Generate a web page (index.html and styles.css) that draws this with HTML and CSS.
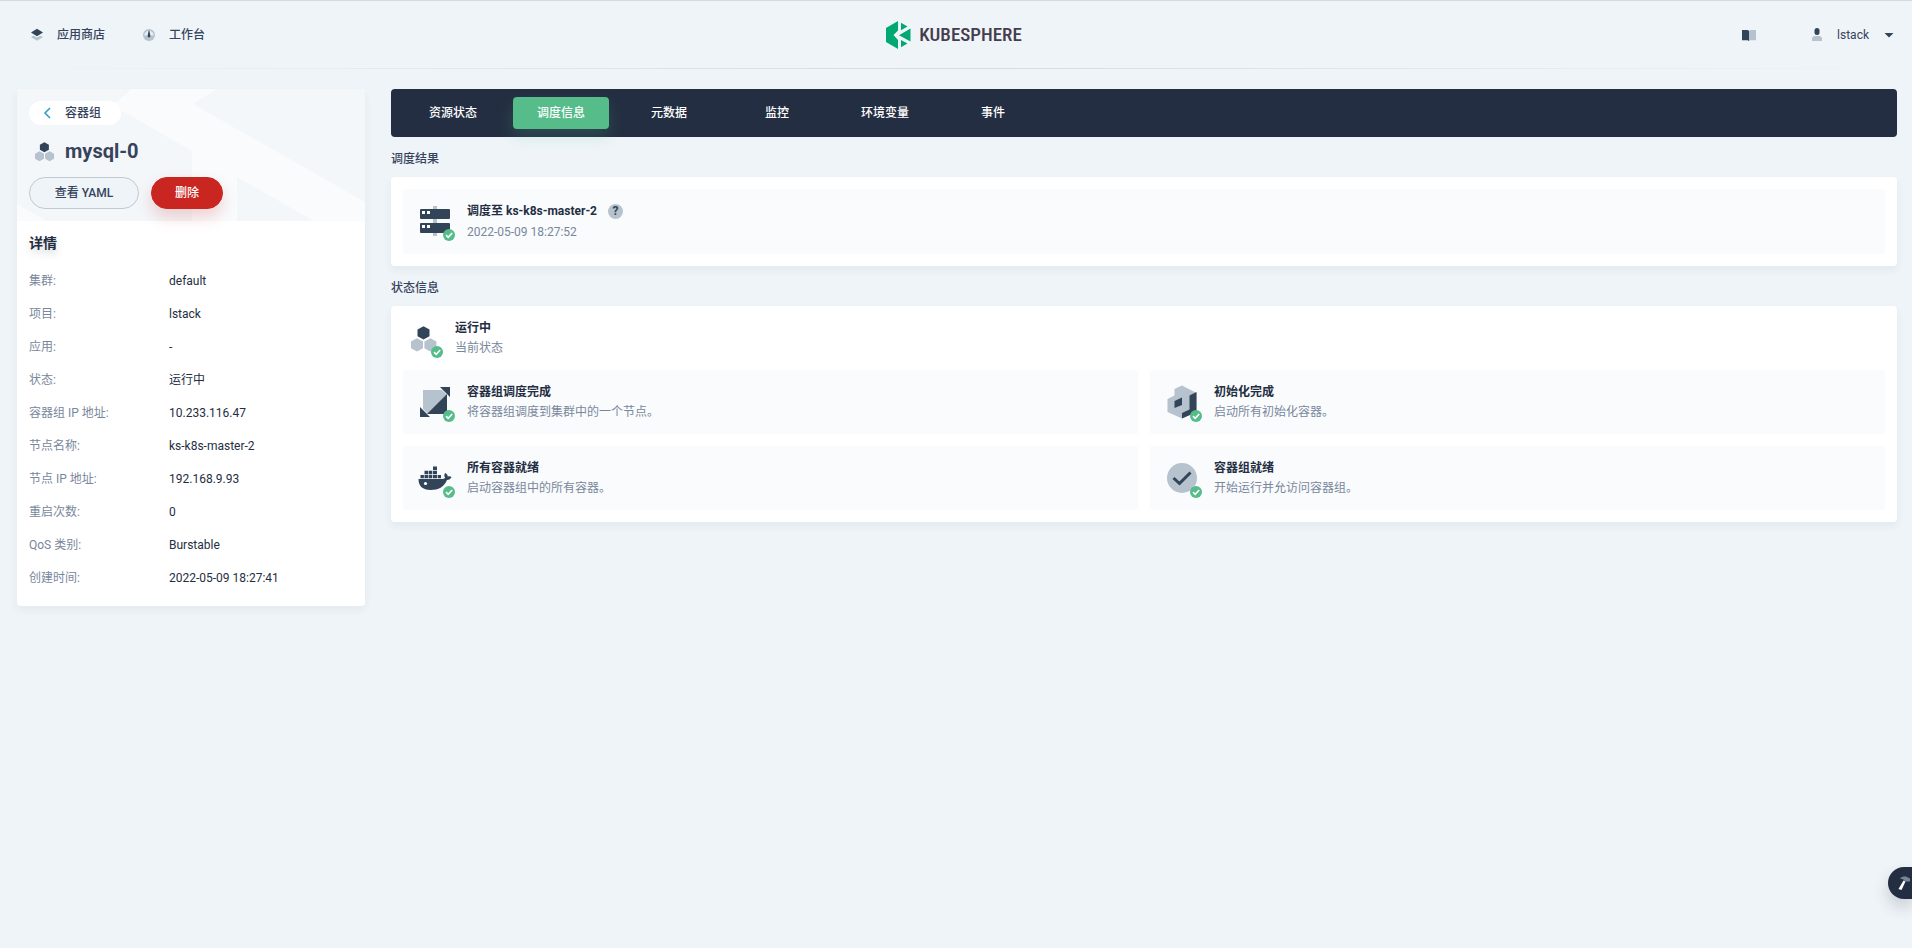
FILE: index.html
```html
<!DOCTYPE html>
<html lang="zh-CN">
<head>
<meta charset="utf-8">
<title>KubeSphere</title>
<link rel="stylesheet" href="styles.css">
</head>
<body>
<svg class="defs" width="0" height="0" aria-hidden="true">
  <symbol id="pods" viewBox="0 0 40 40">
    <path class="dark" d="M20.500 8.200l6 3.300v6.800l-6 3.300-6-3.300v-6.800z"/>
    <path class="light" d="M14 20.200l6 3.300v6.800l-6 3.300-6-3.300v-6.800zM27.400 20.200l6 3.300v6.800l-6 3.300-6-3.300v-6.800z"/>
  </symbol>
  <symbol id="ok" viewBox="0 0 12 12">
    <circle cx="6" cy="6" r="6" fill="#55bc8a"/>
    <path d="M3 6.200l2.200 2.100 4-4.300" fill="none" stroke="#fff" stroke-width="1.600"/>
  </symbol>
</svg>

<header class="topbar">
  <nav class="topnav">
    <a href="#"><svg width="16" height="16" viewBox="0 0 16 16"><path class="light" d="M2 10l2.500-1.200L8 10.500l3.500-1.700L14 10l-6 3.800z"/><path class="dark" d="M8 1.800L14 5.500 8 9.200 2 5.500z"/></svg>应用商店</a>
    <a href="#"><svg width="16" height="16" viewBox="0 0 16 16"><circle class="light" cx="8" cy="8" r="6"/><path d="M3.300 8.500a4.700 4.700 0 0 1 9.400 0z" fill="#e6ecf1"/><path class="dark" d="M7.600 3.800h.8l1 5.200a1.400 1.400 0 1 1-2.800 0z"/></svg>工作台</a>
  </nav>
  <a class="logo" href="#">
    <svg width="25" height="28" viewBox="0 0 25 28" fill="#00a971"><path d="M12 0v9.500L7.500 14l4.500 5v9L0 21V7zM15 1.800L21.500 5.500 15 9.300zM24.500 7.500v13L13 14.200zM15 19l6.500 3.500L15 26.200z"/></svg>
    <span>KUBESPHERE</span>
  </a>
  <div class="account">
    <button class="plain" aria-label="文档"><svg width="16" height="16" viewBox="0 0 16 16"><path class="dark" d="M1 3h5.500L8 3.700V14l-1.500-.8H1z"/><path class="light" d="M8 3.700L9.500 3H15v10.200H9.500L8 14z"/></svg></button>
    <button class="plain user"><svg width="16" height="16" viewBox="0 0 16 16"><rect class="dark" x="5.500" y="1" width="5" height="7" rx="2.500"/><path class="light" d="M3 14v-2.500C3 10 4.500 9 6 9h4c1.500 0 3 1 3 2.500V14z"/></svg><span>lstack</span><svg width="16" height="16" viewBox="0 0 16 16"><path class="dark" d="M3.500 6h9L8 10.500z"/></svg></button>
  </div>
</header>

<div class="layout">
  <aside class="side">
    <div class="side-head">
      <svg class="pattern" viewBox="0 0 348 132" preserveAspectRatio="none" aria-hidden="true"><path d="M115 0H200L176 15 348 113V132H297L220 88V132H175V62L95 16zM0 115L30 132H0z"/></svg>
      <a class="back" href="#"><svg width="8" height="12" viewBox="0 0 8 12"><path d="M7 1L2 6l5 5" fill="none" stroke="#329dce" stroke-width="1.600"/></svg>容器组</a>
      <h1><svg width="30" height="30"><use href="#pods"/></svg>mysql-0</h1>
      <div class="actions"><button class="btn wide">查看 YAML</button><button class="btn danger">删除</button></div>
    </div>
    <div class="details">
      <h2>详情</h2>
      <dl>
        <div><dt>集群:</dt><dd>default</dd></div>
        <div><dt>项目:</dt><dd>lstack</dd></div>
        <div><dt>应用:</dt><dd>-</dd></div>
        <div><dt>状态:</dt><dd>运行中</dd></div>
        <div><dt>容器组 IP 地址:</dt><dd>10.233.116.47</dd></div>
        <div><dt>节点名称:</dt><dd>ks-k8s-master-2</dd></div>
        <div><dt>节点 IP 地址:</dt><dd>192.168.9.93</dd></div>
        <div><dt>重启次数:</dt><dd>0</dd></div>
        <div><dt>QoS 类别:</dt><dd>Burstable</dd></div>
        <div><dt>创建时间:</dt><dd>2022-05-09 18:27:41</dd></div>
      </dl>
    </div>
  </aside>

  <main class="main">
    <nav class="tabs">
      <a href="#">资源状态</a><a class="active" href="#">调度信息</a><a href="#">元数据</a><a href="#">监控</a><a href="#">环境变量</a><a href="#">事件</a>
    </nav>

    <h3>调度结果</h3>
    <section class="card">
      <div class="item box result">
        <div class="icon"><svg width="40" height="40" viewBox="0 0 40 40"><path class="light" d="M18 5h4v30h-4z"/><path class="dark" d="M5 9a1 1 0 0 1 1-1h28a1 1 0 0 1 1 1v8a1 1 0 0 1-1 1H6a1 1 0 0 1-1-1zM5 23a1 1 0 0 1 1-1h28a1 1 0 0 1 1 1v8a1 1 0 0 1-1 1H6a1 1 0 0 1-1-1z"/><path fill="#fff" d="M7 10h3v3H7zM12 10h3v3h-3zM7 24h3v3H7zM12 24h3v3h-3z"/></svg><svg class="badge"><use href="#ok"/></svg></div>
        <div><strong>调度至 ks-k8s-master-2<button class="help" aria-label="帮助">?</button></strong><p>2022-05-09 18:27:52</p></div>
      </div>
    </section>

    <h3>状态信息</h3>
    <section class="card">
      <div class="item">
        <div class="icon"><svg width="40" height="40"><use href="#pods"/></svg><svg class="badge"><use href="#ok"/></svg></div>
        <div><strong>运行中</strong><p>当前状态</p></div>
      </div>
      <div class="grid">
        <div class="item box">
          <div class="icon"><svg width="40" height="40" viewBox="0 0 40 40"><path class="light" d="M8 8h19l5 5L13 32l-5-5z"/><path class="dark" d="M32 12v20H12zM25 5h10v10zM5 25l10 10H5z"/></svg><svg class="badge"><use href="#ok"/></svg></div>
          <div><strong>容器组调度完成</strong><p>将容器组调度到集群中的一个节点。</p></div>
        </div>
        <div class="item box">
          <div class="icon"><svg width="40" height="40" viewBox="0 0 40 40"><path class="light" d="M12.500 7L20 3.500 34.500 11v19L20 36.500 5.500 30V17l7-3.500z"/><path class="dark" d="M34.500 10v20L20 36.500V31l7.500-3.500V13.500zM12.500 19l7.500-3.500V23l-7.500 3z"/></svg><svg class="badge"><use href="#ok"/></svg></div>
          <div><strong>初始化完成</strong><p>启动所有初始化容器。</p></div>
        </div>
        <div class="item box">
          <div class="icon"><svg width="40" height="40" viewBox="0 0 40 40"><path class="dark" d="M18 8.500h4v3.500h-4zM9.500 12.700h3.600v3.600H9.500zM13.700 12.700h3.600v3.600h-3.600zM18 12.700h4v3.600h-4zM5.500 17h3.400v3.300H5.500zM9.500 17h3.600v3.300H9.500zM13.700 17h3.600v3.300h-3.600zM18 17h4v3.300h-4zM22.700 17H26v3.300h-3.300zM3.500 21h24c1.500 0 2.300-.5 2.600-1.200-1.200-1.600-1-3.500.2-4.800 1.500.8 2.400 2 2.500 3.500 1.300-.4 2.700-.2 3.700.5-.8 2-2.300 3-4.500 3-3 7-8.500 10-16.500 10S3.500 28 3.500 21z"/><circle cx="10.500" cy="25.500" r="1.600" fill="#fff"/></svg><svg class="badge"><use href="#ok"/></svg></div>
          <div><strong>所有容器就绪</strong><p>启动容器组中的所有容器。</p></div>
        </div>
        <div class="item box">
          <div class="icon"><svg width="40" height="40" viewBox="0 0 40 40"><circle class="light" cx="20" cy="20" r="15"/><path d="M11.500 20l6 5.500 11-11" fill="none" stroke="#324558" stroke-width="3"/></svg><svg class="badge"><use href="#ok"/></svg></div>
          <div><strong>容器组就绪</strong><p>开始运行并允访问容器组。</p></div>
        </div>
      </div>
    </section>
  </main>
</div>

<button class="toolbox" aria-label="工具箱"><svg width="16" height="16" viewBox="0 0 16 16"><path d="M7.500 5.500l2 1L5.500 15l-3-1z" fill="#fff"/><path d="M4 3.500C6 1.500 9 1 11 2l3 1.500v3L9 6.500 7.500 4.500z" fill="#7a8499"/></svg></button>
</body>
</html>
```
FILE: styles.css
```css
* { box-sizing: border-box; }

body {
  margin: 0;
  min-height: 100vh;
  border-top: 1px solid #d8dade;
  background: #eff4f8;
  color: #242e42;
  font: 12px/20px Roboto, "Noto Sans CJK SC", sans-serif;
}

h1, h2, h3, p, dl, dd { margin: 0; }
a { color: inherit; text-decoration: none; }
button { font: inherit; color: inherit; cursor: pointer; }
svg { display: block; flex: none; }
.defs { position: absolute; }
.dark { fill: #324558; }
.light { fill: #b6c2cd; }

.topbar {
  display: grid;
  grid-template-columns: 1fr auto 1fr;
  align-items: center;
  height: 68px;
  padding: 0 15px;
  border-bottom: 1px solid;
  border-image: linear-gradient(to right, #eff4f8, #d5dbe5 50%, #eff4f8) 1;
}
.topnav { display: flex; gap: 36px; padding-left: 14px; }
.topnav a { display: flex; align-items: center; gap: 12px; color: #36435c; font-weight: 500; }
.logo { display: flex; align-items: center; gap: 8px; padding-right: 4px; color: #443d4e; }
.logo span { font: 500 19px/28px "Liberation Sans Narrow", "Roboto Condensed", Roboto, sans-serif; }
.account { display: flex; justify-content: flex-end; align-items: center; gap: 52px; }
.plain { display: flex; align-items: center; padding: 0; border: 0; background: none; color: #36435c; }
.user span { margin: 0 12px; }

.layout { display: flex; align-items: flex-start; gap: 26px; padding: 20px 15px 20px 17px; }

.side {
  flex: 0 0 348px;
  overflow: hidden;
  border-radius: 4px;
  background: #fff;
  box-shadow: 0 4px 8px rgba(36, 46, 66, .06);
}
.side-head { position: relative; padding: 12px; background: #f3f7fa; }
.side-head > * { position: relative; }
.side-head .pattern { position: absolute; inset: 0; width: 100%; height: 100%; fill: #f9fbfd; }
.back {
  display: inline-flex;
  align-items: center;
  gap: 14px;
  height: 24px;
  padding: 0 20px 0 14px;
  border-radius: 12px;
  background: #fff;
  color: #36435c;
  font-weight: 500;
}
h1 { display: flex; align-items: center; gap: 6px; height: 28px; margin: 12px 0; color: #36435c; font-size: 20px; font-weight: 700; }
.actions { display: flex; gap: 12px; }
.btn { height: 32px; padding: 0 23px; border: 1px solid #c1c9d1; border-radius: 16px; background: #eff4f9; color: #36435c; font-weight: 500; }
.wide { min-width: 110px; }
.danger { border-color: #ca2621; background: #ca2621; color: #fff; box-shadow: 0 8px 16px rgba(202, 38, 33, .2); }

.details { padding: 12px 12px 17px; }
h2 { margin-bottom: 18px; font-size: 14px; font-weight: 700; text-shadow: 0 4px 8px rgba(36, 46, 66, .2); }
dl { display: grid; gap: 12px; }
dl div { display: grid; grid-template-columns: 140px 1fr; line-height: 21px; }
dt { color: #79879c; }

.main { flex: 1; min-width: 0; }
.tabs { display: flex; gap: 12px; padding: 8px 14px; border-radius: 4px; background: #242e42; }
.tabs a { min-width: 96px; border-radius: 4px; color: #fff; font-weight: 500; line-height: 32px; text-align: center; }
.tabs .active { background: #55bc8a; box-shadow: 0 8px 16px rgba(85, 188, 138, .2); }
h3 { margin: 12px 0 8px; color: #36435c; font-size: 12px; font-weight: 500; }
.card { padding: 12px; border-radius: 4px; background: #fff; box-shadow: 0 4px 8px rgba(36, 46, 66, .06); }
.item { display: flex; gap: 12px; }
.item strong { display: flex; align-items: center; font-weight: 700; }
.item p { color: #79879c; }
.result strong { line-height: 21px; }
.box { padding: 12px; border-radius: 2px; background: #f9fbfd; }
.icon { position: relative; flex: none; width: 40px; height: 40px; }
.badge { position: absolute; right: 0; bottom: 0; width: 12px; height: 12px; }
.grid { display: grid; grid-template-columns: 1fr 1fr; gap: 12px; margin-top: 12px; }
.help { width: 15px; height: 15px; margin-left: 11px; padding: 0; border: 0; border-radius: 50%; background: #b6c2cd; color: #324558; font-weight: 700; line-height: 15px; }

.toolbox {
  position: fixed;
  right: 0;
  bottom: 49px;
  width: 24px;
  height: 32px;
  padding: 0 0 0 8px;
  border: 0;
  border-radius: 16px 0 0 16px;
  background: #242e42;
  box-shadow: 0 8px 16px rgba(36, 46, 66, .2);
}
```
